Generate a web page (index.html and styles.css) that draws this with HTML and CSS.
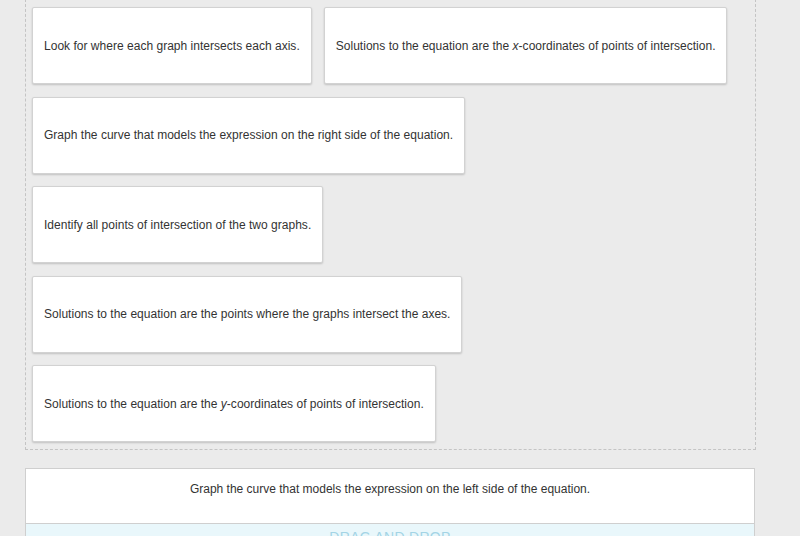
FILE: index.html
```html
<!DOCTYPE html>
<html>
<head>
<meta charset="utf-8">
<link rel="stylesheet" href="styles.css">
</head>
<body>
<div class="bank">
  <div class="tile"><span>Look for where each graph intersects each axis.</span></div>
  <div class="tile"><span>Solutions to the equation are the <i>x</i>-coordinates of points of intersection.</span></div>
  <div class="tile"><span>Graph the curve that models the expression on the right side of the equation.</span></div>
  <div class="tile"><span>Identify all points of intersection of the two graphs.</span></div>
  <div class="tile"><span>Solutions to the equation are the points where the graphs intersect the axes.</span></div>
  <div class="tile"><span>Solutions to the equation are the <i>y</i>-coordinates of points of intersection.</span></div>
</div>
<div class="answer">
  <div class="answer-text">Graph the curve that models the expression on the left side of the equation.</div>
  <div class="drop">DRAG AND DROP</div>
</div>
</body>
</html>
```
FILE: styles.css
```css
html, body {
  margin: 0;
  padding: 0;
}
body {
  background: #ebebeb;
  font-family: "Liberation Sans", Arial, sans-serif;
  font-size: 12px;
  color: #333;
  width: 800px;
  height: 536px;
  overflow: hidden;
}
.bank {
  margin: -1px 0 0 25px;
  border: 1px dashed #c4c4c4;
  padding: 7px 6px 7px 6px;
  display: flex;
  flex-wrap: wrap;
  column-gap: 12px;
  row-gap: 12.5px;
  width: 717px;
}
.tile {
  height: 77px;
  box-sizing: border-box;
  display: flex;
  align-items: center;
  padding: 0 11px;
  background: #fff;
  border: 1px solid #d2d2d2;
  border-radius: 2px;
  box-shadow: 0 1px 2px rgba(0, 0, 0, 0.18);
  white-space: nowrap;
  letter-spacing: 0.02px;
}
.answer {
  margin: 18px 0 0 25px;
  width: 730px;
  box-sizing: border-box;
  border: 1px solid #cfcfcf;
  background: #fff;
}
.answer-text {
  text-align: center;
  padding-top: 13px;
  height: 41px;
  line-height: 14px;
}
.drop {
  border-top: 1px solid #cfcfcf;
  background: #e9f7fb;
  color: #a3d4e5;
  text-align: center;
  font-size: 14px;
  padding-top: 5px;
  height: 40px;
  letter-spacing: 0.3px;
}
```
